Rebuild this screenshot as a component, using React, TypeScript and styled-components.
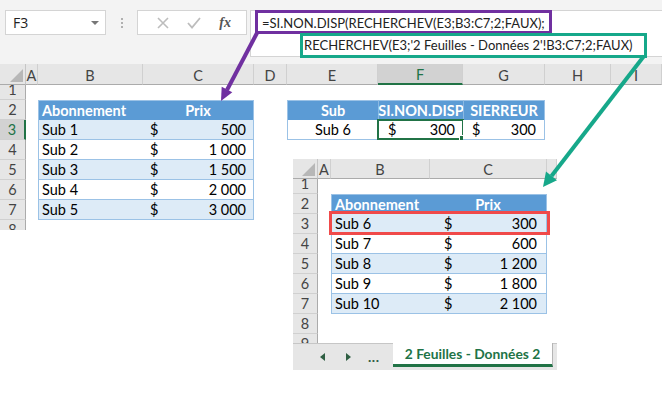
import React from "react";
import styled, { createGlobalStyle, css } from "styled-components";

const GlobalStyle = createGlobalStyle`
  html, body {
    margin: 0;
    padding: 0;
    background: #ffffff;
  }
  body {
    font-family: Lato, "Liberation Sans", sans-serif;
    color: #000;
  }
`;

const BLUE = "#5b9bd5";
const BAND = "#ddebf7";
const LINE = "#9bc2e6";
const GREEN = "#217346";
const PURPLE = "#7030a0";
const TEAL = "#16a88a";

const Page = styled.div`
  position: relative;
  width: 662px;
  height: 395px;
  overflow: hidden;
  background: #fff;
`;

/* ---------- formula bar ---------- */

const FormulaBar = styled.div`
  height: 64px;
  box-sizing: border-box;
  background: #f3f3f3;
  display: flex;
  align-items: flex-start;
  padding: 10px 0 0 5px;
`;

const NameBox = styled.div`
  width: 101px;
  height: 25px;
  box-sizing: border-box;
  background: #fff;
  border: 1px solid #d4d4d4;
  display: flex;
  align-items: center;
  justify-content: space-between;
  padding: 0 6px 0 7px;
  font-family: "Open Sans", "Liberation Sans", sans-serif;
  font-size: 14px;
  color: #222;
`;

const DropArrow = styled.span`
  width: 0;
  height: 0;
  border-left: 4px solid transparent;
  border-right: 4px solid transparent;
  border-top: 4px solid #777;
`;

const Grip = styled.div`
  width: 31px;
  height: 25px;
  display: flex;
  flex-direction: column;
  align-items: center;
  justify-content: center;
  gap: 2px;
`;

const GripDot = styled.span`
  width: 2px;
  height: 2px;
  background: #b0b0b0;
`;

const FnBox = styled.div`
  width: 110px;
  height: 25px;
  box-sizing: border-box;
  background: #fff;
  border: 1px solid #d4d4d4;
  display: flex;
  align-items: center;
  justify-content: space-around;
  padding: 0 6px 0 10px;
`;

const FxLabel = styled.span`
  font-family: "Liberation Serif", serif;
  font-style: italic;
  font-weight: bold;
  font-size: 14px;
  color: #555;
`;

const FormulaInput = styled.div`
  flex: 1;
  margin-left: 3px;
  height: 47px;
  box-sizing: border-box;
  background: #fff;
  border: 1px solid #d4d4d4;
  border-right: none;
  padding: 2px 0 0 11px;
  font-size: 13px;
  line-height: 20px;
  color: #222;
  white-space: nowrap;
`;

/* ---------- annotations ---------- */

const NoteBox = styled.div<{ $color: string }>`
  position: absolute;
  box-sizing: border-box;
  border: 3.5px solid ${(p) => p.$color};
`;

const TealNote = styled(NoteBox)`
  left: 300px;
  top: 33px;
  width: 347px;
  height: 25px;
  background: #fff;
  padding-left: 1px;
  font-size: 13px;
  line-height: 18px;
  color: #222;
  white-space: nowrap;
`;

const PurpleNote = styled(NoteBox)`
  left: 255px;
  top: 10px;
  width: 297px;
  height: 24px;
`;

const Overlay = styled.svg`
  position: absolute;
  left: 0;
  top: 0;
  pointer-events: none;
`;

/* ---------- sheet grid ---------- */

const Grid = styled.div<{ $cols: string; $rows: string; $height: number }>`
  display: grid;
  grid-template-columns: ${(p) => p.$cols};
  grid-template-rows: ${(p) => p.$rows};
  height: ${(p) => p.$height}px;
  overflow: hidden;
  background: #fff;
  font-size: 14.5px;
`;

const headerBase = css`
  background: #e6e6e6;
  color: #444;
  display: flex;
  align-items: center;
  justify-content: center;
  box-sizing: border-box;
  font-size: 14.5px;
`;

const Corner = styled.div`
  ${headerBase};
  position: relative;
  border-right: 1px solid #c6c6c6;
  border-bottom: 1px solid #ababab;
  &::after {
    content: "";
    position: absolute;
    right: 2px;
    bottom: 2px;
    width: 0;
    height: 0;
    border-left: 13px solid transparent;
    border-bottom: 13px solid #b7b7b7;
  }
`;

const ColHead = styled.div<{ $active?: boolean }>`
  ${headerBase};
  border-right: 1px solid #d0d0d0;
  border-bottom: 1px solid #ababab;
  padding-top: 2px;
  ${(p) =>
    p.$active &&
    css`
      background: #d2d2d2;
      color: ${GREEN};
      border-bottom: 2px solid ${GREEN};
    `}
`;

const RowHead = styled.div<{ $active?: boolean }>`
  ${headerBase};
  border-right: 1px solid #ababab;
  border-bottom: 1px solid #d0d0d0;
  align-items: flex-end;
  padding-bottom: 1px;
  ${(p) =>
    p.$active &&
    css`
      background: #d2d2d2;
      color: ${GREEN};
      border-right: 2px solid ${GREEN};
    `}
`;

type Fill = "head" | "band" | "plain" | "none";

const Cell = styled.div<{
  $fill: Fill;
  $align?: "left" | "center" | "right";
  $l?: boolean;
  $r?: boolean;
  $t?: boolean;
  $b?: boolean;
  $divider?: boolean;
}>`
  position: relative;
  box-sizing: border-box;
  display: flex;
  align-items: flex-end;
  padding: 0 3px 1px;
  white-space: nowrap;
  justify-content: ${(p) =>
    p.$align === "center" ? "center" : p.$align === "right" ? "flex-end" : "flex-start"};
  background: ${(p) =>
    p.$fill === "head" ? BLUE : p.$fill === "band" ? BAND : "#fff"};
  color: ${(p) => (p.$fill === "head" ? "#fff" : "#000")};
  font-weight: ${(p) => (p.$fill === "head" ? 700 : 400)};
  border-left: ${(p) =>
    p.$l ? `1px solid ${p.$divider ? "#8ab8e2" : LINE}` : "none"};
  border-right: ${(p) => (p.$r ? `1px solid ${LINE}` : "none")};
  border-top: ${(p) => (p.$t ? `1px solid ${LINE}` : "none")};
  border-bottom: ${(p) => (p.$b ? `1px solid ${LINE}` : "none")};
`;

const Money = styled.div<{ $padL: number; $padR: number }>`
  flex: 1;
  display: flex;
  justify-content: space-between;
  padding: 0 ${(p) => p.$padR - 3}px 0 ${(p) => p.$padL - 3}px;
`;

const Selection = styled.div`
  position: absolute;
  left: -1px;
  top: -1px;
  right: -1px;
  bottom: -1px;
  border: 2px solid ${GREEN};
  pointer-events: none;
`;

const Handle = styled.div`
  position: absolute;
  right: -4px;
  bottom: -4px;
  width: 5px;
  height: 5px;
  background: ${GREEN};
  border: 1px solid #fff;
`;

/* ---------- pasted second sheet ---------- */

const Inset = styled.div`
  position: absolute;
  left: 293px;
  top: 159px;
  width: 264px;
  display: flex;
  flex-direction: column;
  background: #fff;
`;

const RedFrame = styled.div`
  position: absolute;
  left: 36px;
  top: 52px;
  width: 221px;
  height: 24px;
  box-sizing: border-box;
  border: 3px solid #f04a4a;
`;

const TabBar = styled.div`
  height: 27px;
  background: #e6e6e6;
  border-top: 1px solid #c6c6c6;
  box-sizing: border-box;
  display: flex;
  align-items: stretch;
`;

const TabNav = styled.div`
  width: 100px;
  display: flex;
  align-items: center;
  padding-left: 27px;
  box-sizing: border-box;
  gap: 21px;
`;

const Tri = styled.span<{ $dir: "l" | "r" }>`
  width: 0;
  height: 0;
  border-top: 4px solid transparent;
  border-bottom: 4px solid transparent;
  ${(p) =>
    p.$dir === "l"
      ? css`border-right: 5px solid #2f5f43;`
      : css`border-left: 5px solid #2f5f43;`}
`;

const Ellipsis = styled.span`
  font-weight: 700;
  font-size: 14px;
  line-height: 14px;
  color: #2f5f43;
  margin-left: -4px;
  margin-top: 0;
  letter-spacing: 0.5px;
`;

const ActiveTab = styled.div`
  width: 160px;
  height: 24px;
  margin-top: -1px;
  box-sizing: border-box;
  background: #fff;
  border-right: 1px solid #b5b5b5;
  border-bottom: 3px solid ${GREEN};
  display: flex;
  align-items: center;
  justify-content: center;
  font-weight: 700;
  font-size: 13.8px;
  color: ${GREEN};
  white-space: nowrap;
`;

/* ---------- data ---------- */

type Row = { n: number; band?: boolean; label: string; amount: string };

const mainRows: Row[] = [
  { n: 3, band: true, label: "Sub 1", amount: "500" },
  { n: 4, label: "Sub 2", amount: "1 000" },
  { n: 5, band: true, label: "Sub 3", amount: "1 500" },
  { n: 6, label: "Sub 4", amount: "2 000" },
  { n: 7, band: true, label: "Sub 5", amount: "3 000" },
];

const insetRows: Row[] = [
  { n: 3, band: true, label: "Sub 6", amount: "300" },
  { n: 4, label: "Sub 7", amount: "600" },
  { n: 5, band: true, label: "Sub 8", amount: "1 200" },
  { n: 6, label: "Sub 9", amount: "1 800" },
  { n: 7, band: true, label: "Sub 10", amount: "2 100" },
];

const mainCols = ["A", "B", "C", "D", "E", "F", "G", "H", "I"];

const CancelIcon = () => (
  <svg width="12" height="12" viewBox="0 0 12 12">
    <path d="M1 1 L11 11 M11 1 L1 11" stroke="#bdbdbd" strokeWidth="1.6" />
  </svg>
);

const EnterIcon = () => (
  <svg width="14" height="12" viewBox="0 0 14 12">
    <path d="M1 6 L5 10.5 L13 1" stroke="#bdbdbd" strokeWidth="1.8" fill="none" />
  </svg>
);

const Blank = ({ n }: { n: number }) => (
  <>
    {Array.from({ length: n }).map((_, i) => (
      <Cell key={i} $fill="none" />
    ))}
  </>
);

const MainSheet = () => (
  <Grid
    $cols="26px 12px 105px 111px 33px 91px 85px 82px 66px 1fr"
    $rows="21px 15px repeat(7, 20px)"
    $height={166}
  >
    <Corner />
    {mainCols.map((c) => (
      <ColHead key={c} $active={c === "F"}>
        {c}
      </ColHead>
    ))}

    {/* row 1 */}
    <RowHead>1</RowHead>
    <Blank n={9} />

    {/* row 2 */}
    <RowHead>2</RowHead>
    <Blank n={1} />
    <Cell $fill="head" $l $t>
      Abonnement
    </Cell>
    <Cell $fill="head" $r $t $align="center">
      Prix
    </Cell>
    <Blank n={1} />
    <Cell $fill="head" $l $t $align="center">
      Sub
    </Cell>
    <Cell $fill="head" $l $divider $t $align="center">
      SI.NON.DISP
    </Cell>
    <Cell $fill="head" $l $divider $r $t $align="center">
      SIERREUR
    </Cell>
    <Blank n={2} />

    {mainRows.map((r) => (
      <React.Fragment key={r.n}>
        <RowHead $active={r.n === 3}>{r.n}</RowHead>
        <Blank n={1} />
        <Cell $fill={r.band ? "band" : "plain"} $l $b>
          {r.label}
        </Cell>
        <Cell $fill={r.band ? "band" : "plain"} $r $b>
          <Money $padL={7} $padR={7}>
            <span>$</span>
            <span>{r.amount}</span>
          </Money>
        </Cell>
        {r.n === 3 ? (
          <>
            <Blank n={1} />
            <Cell $fill="plain" $l $b $align="center">
              Sub 6
            </Cell>
            <Cell $fill="plain" $b>
              <Money $padL={10} $padR={8}>
                <span>$</span>
                <span>300</span>
              </Money>
              <Selection>
                <Handle />
              </Selection>
            </Cell>
            <Cell $fill="plain" $r $b>
              <Money $padL={9} $padR={8}>
                <span>$</span>
                <span>300</span>
              </Money>
            </Cell>
            <Blank n={2} />
          </>
        ) : (
          <Blank n={6} />
        )}
      </React.Fragment>
    ))}

    <RowHead>8</RowHead>
    <Blank n={9} />
  </Grid>
);

const SecondSheet = () => (
  <Inset>
    <Grid
      $cols="25px 13px 99px 117px 10px"
      $rows="20px 15px repeat(8, 20px)"
      $height={184}
    >
      <Corner />
      <ColHead>A</ColHead>
      <ColHead>B</ColHead>
      <ColHead>C</ColHead>
      <ColHead />

      <RowHead>1</RowHead>
      <Blank n={4} />

      <RowHead>2</RowHead>
      <Blank n={1} />
      <Cell $fill="head" $l $t>
        Abonnement
      </Cell>
      <Cell $fill="head" $r $t $align="center">
        Prix
      </Cell>
      <Blank n={1} />

      {insetRows.map((r) => (
        <React.Fragment key={r.n}>
          <RowHead>{r.n}</RowHead>
          <Blank n={1} />
          <Cell $fill={r.band ? "band" : "plain"} $l $b>
            {r.label}
          </Cell>
          <Cell $fill={r.band ? "band" : "plain"} $r $b>
            <Money $padL={14} $padR={9}>
              <span>$</span>
              <span>{r.amount}</span>
            </Money>
          </Cell>
          <Blank n={1} />
        </React.Fragment>
      ))}

      <RowHead>8</RowHead>
      <Blank n={4} />
      <RowHead>9</RowHead>
      <Blank n={4} />
    </Grid>
    <TabBar>
      <TabNav>
        <Tri $dir="l" />
        <Tri $dir="r" />
        <Ellipsis>...</Ellipsis>
      </TabNav>
      <ActiveTab>2 Feuilles - Données 2</ActiveTab>
    </TabBar>
    <RedFrame />
  </Inset>
);

const Arrows = () => (
  <Overlay width={662} height={395} viewBox="0 0 662 395">
    <line x1="257" y1="33" x2="227" y2="90" stroke={PURPLE} strokeWidth="4" />
    <polygon points="221,101 232.3,92.3 221.7,86.7" fill={PURPLE} />
    <line x1="644" y1="56" x2="551.5" y2="176" stroke={TEAL} strokeWidth="4" />
    <polygon points="543,187 557,180.2 546,171.6" fill={TEAL} />
  </Overlay>
);

export default function App() {
  return (
    <Page>
      <GlobalStyle />
      <FormulaBar>
        <NameBox>
          <span>F3</span>
          <DropArrow />
        </NameBox>
        <Grip>
          <GripDot />
          <GripDot />
          <GripDot />
        </Grip>
        <FnBox>
          <CancelIcon />
          <EnterIcon />
          <FxLabel>fx</FxLabel>
        </FnBox>
        <FormulaInput>=SI.NON.DISP(RECHERCHEV(E3;B3:C7;2;FAUX);</FormulaInput>
      </FormulaBar>
      <MainSheet />
      <SecondSheet />
      <PurpleNote $color={PURPLE} />
      <TealNote $color={TEAL}>
        RECHERCHEV(E3;'2 Feuilles - Données 2'!B3:C7;2;FAUX)
      </TealNote>
      <Arrows />
    </Page>
  );
}
